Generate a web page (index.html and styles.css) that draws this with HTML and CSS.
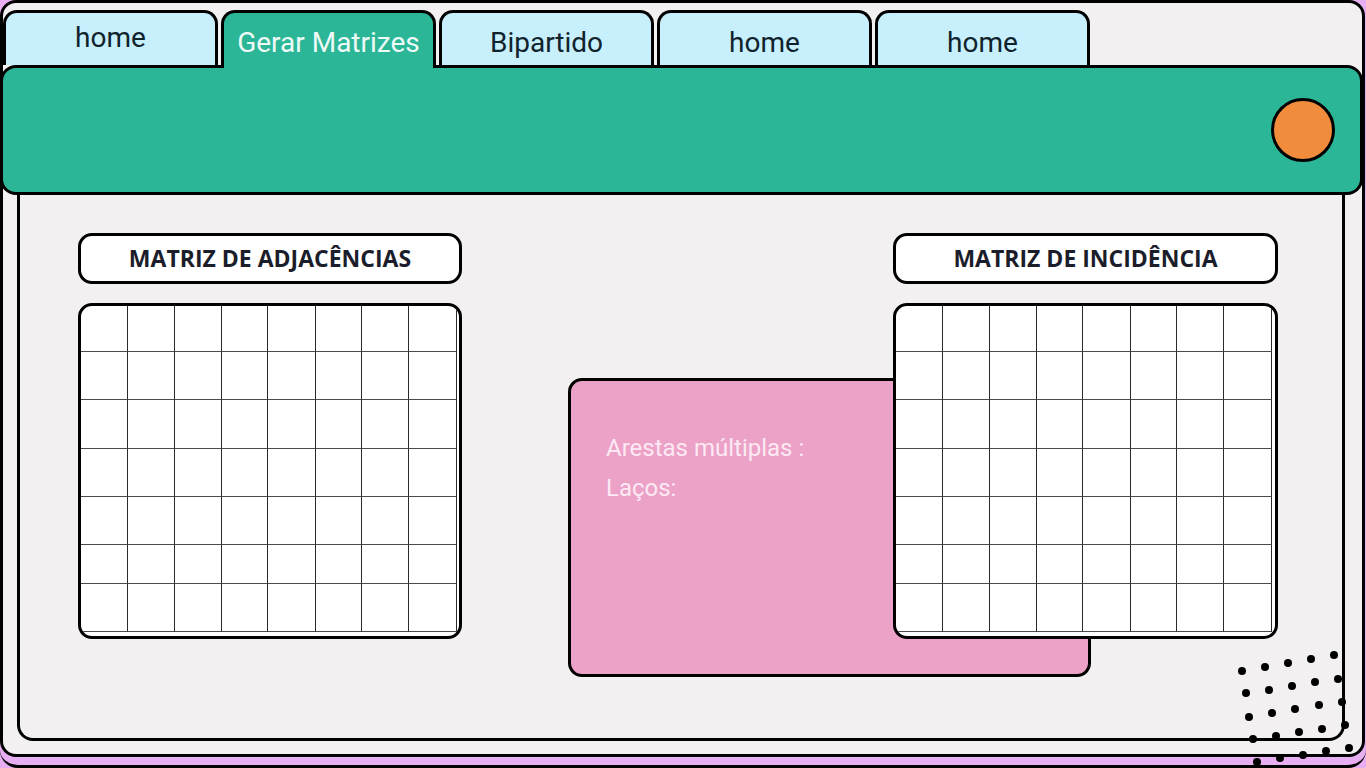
FILE: index.html
```html
<!DOCTYPE html>
<html lang="pt">
<head>
    <meta charset="UTF-8">
    <meta name="viewport" content="width=device-width, initial-scale=1.0">
    <title>Gerar Matrizes</title>
    <link rel="stylesheet" href="styles.css">
</head>
<body>
  <div class="back">
    <div class="frame">

      <div class="tabs">
        <div class="tab first">home</div>
        <div class="tab active">Gerar Matrizes</div>
        <div class="tab">Bipartido</div>
        <div class="tab">home</div>
        <div class="tab">home</div>
      </div>

      <div class="bar">
        <div class="dot"></div>
      </div>

      <div class="panel">
        <div class="col">
          <div class="label">MATRIZ DE ADJACÊNCIAS</div>
          <div class="matrix" id="adj"></div>
        </div>

        <div class="info">
          <p>Arestas múltiplas :</p>
          <p>Laços:</p>
        </div>

        <div class="col right">
          <div class="label">MATRIZ DE INCIDÊNCIA</div>
          <div class="matrix" id="inc"></div>
        </div>
      </div>

    </div>

    <svg class="dots" width="130" height="123" viewBox="0 0 130 123">
      <g fill="#000">
        <circle cx="12" cy="26" r="4"/><circle cx="35" cy="22" r="4"/><circle cx="58" cy="18" r="4"/><circle cx="81" cy="14" r="4"/><circle cx="104" cy="10" r="4"/>
        <circle cx="16" cy="48" r="4"/><circle cx="39" cy="45" r="4"/><circle cx="62" cy="41" r="4"/><circle cx="85" cy="37" r="4"/><circle cx="108" cy="34" r="4"/>
        <circle cx="19" cy="72" r="4"/><circle cx="42" cy="68" r="4"/><circle cx="65" cy="64" r="4"/><circle cx="89" cy="60" r="4"/><circle cx="112" cy="57" r="4"/>
        <circle cx="23" cy="94" r="4"/><circle cx="46" cy="91" r="4"/><circle cx="69" cy="87" r="4"/><circle cx="92" cy="84" r="4"/><circle cx="115" cy="80" r="4"/>
        <circle cx="27" cy="117" r="4"/><circle cx="50" cy="113" r="4"/><circle cx="73" cy="110" r="4"/><circle cx="96" cy="106" r="4"/><circle cx="119" cy="103" r="4"/>
      </g>
    </svg>
  </div>

  <script>
    // empty 8 x 7 matrices
    var grids = document.querySelectorAll(".matrix");
    for (var g = 0; g < grids.length; g++) {
      for (var i = 0; i < 56; i++) {
        var cell = document.createElement("div");
        cell.className = "cell";
        grids[g].appendChild(cell);
      }
    }
  </script>
</body>
</html>
```

FILE: styles.css
```css
body{
  margin:0;
  background:#e7aef2;
}
.back{
  position:relative;
  width:1366px;
  height:768px;
  box-sizing:border-box;
  padding:0 1px 8px 0;
  background:#e7aef2;
  border-bottom:3px solid #000;
  border-radius:0 0 18px 18px;
  overflow:hidden;
}
.frame{
  height:100%;
  box-sizing:border-box;
  display:flex;
  flex-direction:column;
  background:#f2f0f0;
  border:3px solid #000;
  border-radius:16px;
}

/* tabs */
.tabs{
  display:flex;
  gap:3px;
  margin-top:7px;
}
.tab{
  width:215px;
  height:55px;
  box-sizing:border-box;
  padding-top:14px;
  background:#c8effc;
  border:3px solid #000;
  border-bottom:none;
  border-radius:14px 14px 0 0;
  font-family:Roboto, "Liberation Sans", sans-serif;
  font-size:28px;
  line-height:32px;
  text-align:center;
  color:#10232c;
}
.tab.first{
  padding-top:9px;
}
.tab.active{
  position:relative;
  z-index:2;
  height:58px;
  margin-bottom:-3px;
  background:#2bb697;
  color:#eefaf6;
}

/* green bar */
.bar{
  position:relative;
  z-index:1;
  height:130px;
  box-sizing:border-box;
  margin:0 -1px 0 -3px;
  display:flex;
  align-items:center;
  justify-content:flex-end;
  padding-right:25px;
  background:#2bb697;
  border:3px solid #000;
  border-radius:16px;
}
.bar .dot{
  width:58px;
  height:58px;
  background:#f08c3c;
  border:3px solid #000;
  border-radius:50%;
}

/* content panel */
.panel{
  flex:1;
  display:flex;
  align-items:flex-start;
  margin:-10px 17px 13px 14px;
  padding:48px 0 0 58px;
  border:3px solid #000;
  border-top:none;
  border-radius:0 0 16px 16px;
}
.col{
  width:384px;
  display:flex;
  flex-direction:column;
  gap:19px;
}
.col.right{
  position:relative;
  z-index:1;
  width:385px;
  margin-left:-198px;
}
.label{
  height:51px;
  box-sizing:border-box;
  background:#fff;
  border:3px solid #000;
  border-radius:14px;
  font-family:"Open Sans", "Liberation Sans", sans-serif;
  font-weight:bold;
  font-size:23px;
  line-height:45px;
  text-align:center;
  color:#1b1d2b;
}
.matrix{
  height:336px;
  box-sizing:border-box;
  display:grid;
  grid-template-columns:47px 47px 47px 46px 48px 46px 47px 48px;
  grid-template-rows:46px 48px 49px 48px 48px 39px 48px;
  align-content:start;
  background:#fff;
  border:3px solid #000;
  border-radius:14px;
  overflow:hidden;
}
.matrix .cell{
  border-right:1px solid #2a2a2a;
  border-bottom:1px solid #4a4a4a;
}

.info{
  width:523px;
  height:299px;
  box-sizing:border-box;
  flex-shrink:0;
  margin:145px 0 0 106px;
  padding:47px 35px;
  background:#eca1c7;
  border:3px solid #000;
  border-radius:14px;
  font-family:Roboto, "Liberation Sans", sans-serif;
  font-size:24px;
  line-height:40px;
  color:#fde9f3;
}
.info p{
  margin:0;
}

.dots{
  position:absolute;
  left:1230px;
  top:645px;
  z-index:3;
}
```
